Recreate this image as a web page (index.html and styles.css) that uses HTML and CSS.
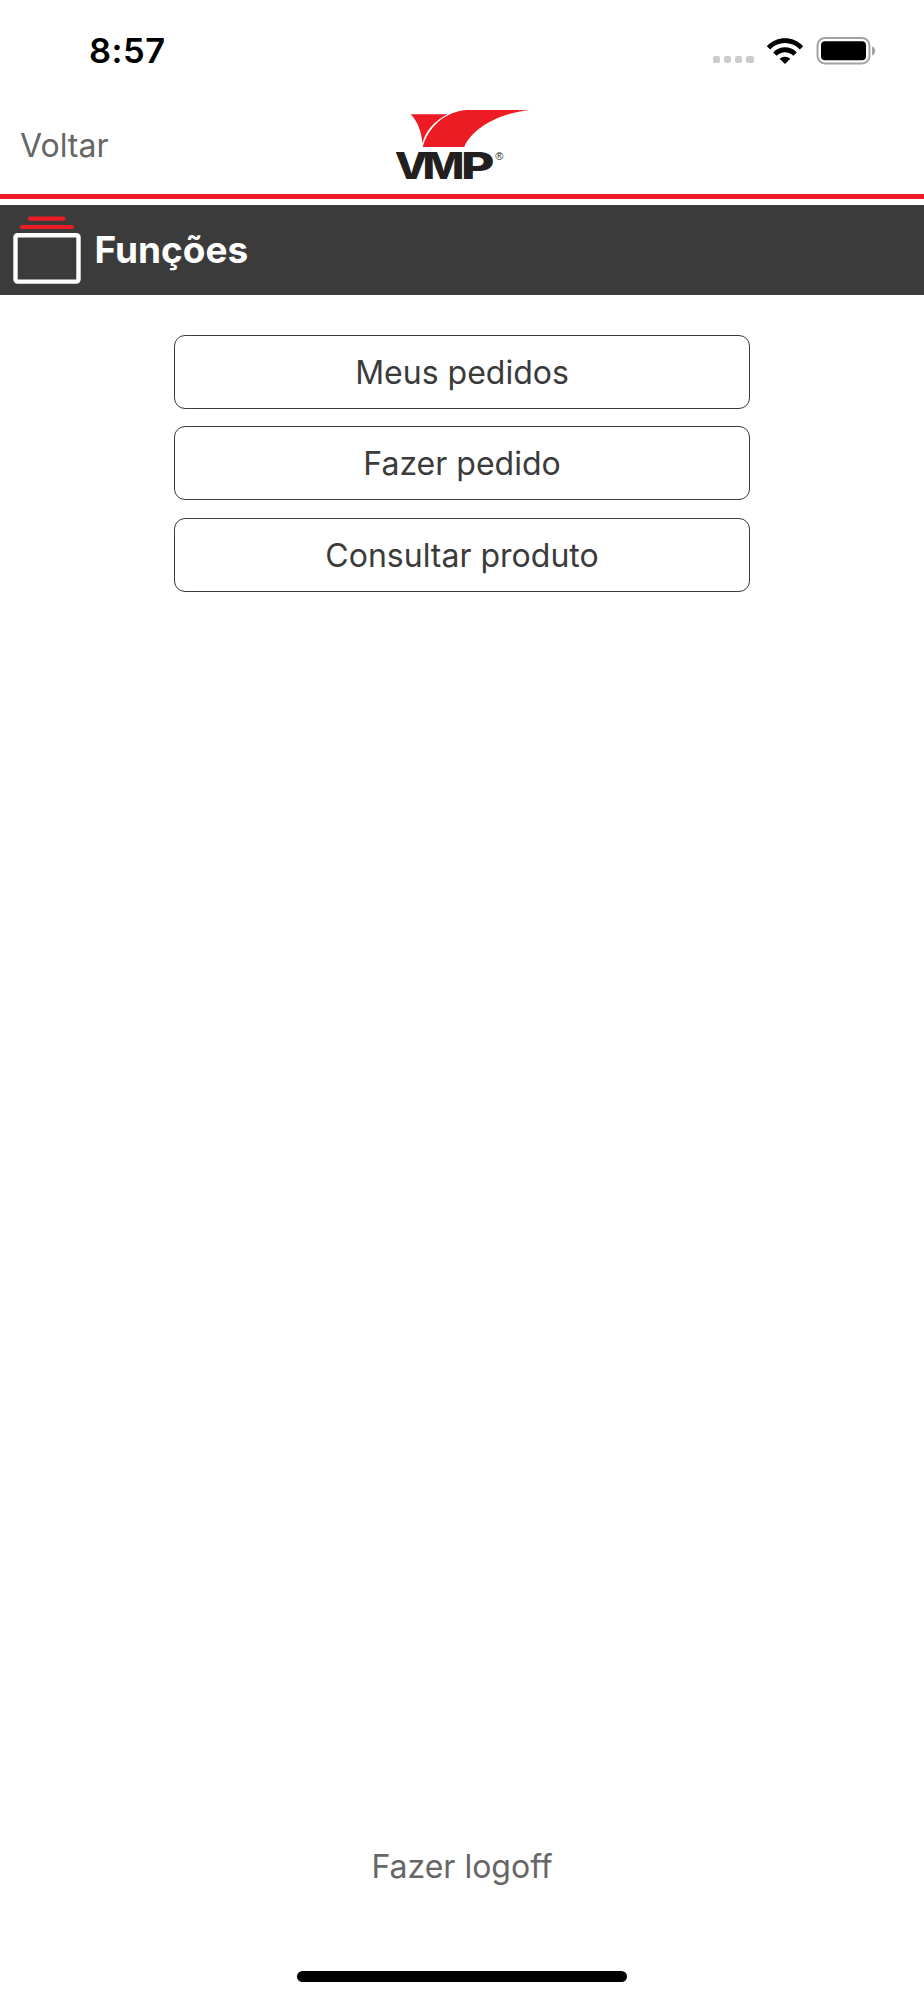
FILE: index.html
```html
<!DOCTYPE html>
<html lang="pt-BR">
<head>
    <meta charset="UTF-8">
    <meta name="viewport" content="width=device-width, initial-scale=1.0">
    <title>VMP - Funções</title>
    <link rel="stylesheet" href="styles.css">
</head>
<body>
    <div class="app">
        <div class="status-bar">
            <span class="time">8:57</span>
            <div class="status-icons">
                <div class="dots">
                    <i></i><i></i><i></i><i></i>
                </div>
                <svg class="wifi" width="38" height="28" viewBox="0 0 38 28">
                    <path d="M0.8 9.2C11 -1.4 27 -1.4 37.2 9.2L33.8 12.4C25.5 4 12.5 4 4.2 12.4Z"/>
                    <path d="M7.2 15.4C13.8 8.6 24.2 8.6 30.8 15.4L27.4 18.7C22.5 14 15.5 14 10.6 18.7Z"/>
                    <path d="M13.6 21.8C16.6 19 21.4 19 24.4 21.8L19 27Z"/>
                </svg>
                <svg class="battery" width="60" height="28" viewBox="0 0 60 28">
                    <rect class="battery-frame" x="1.5" y="1" width="52" height="25.5" rx="7.5"/>
                    <rect x="5" y="4.3" width="45" height="19" rx="4"/>
                    <path class="battery-tip" d="M56 9.5C60.3 11 60.3 17 56 18.5Z"/>
                </svg>
            </div>
        </div>

        <div class="header">
            <a class="back" href="#">Voltar</a>
            <svg class="logo" width="140" height="88" viewBox="0 0 140 88">
                <g class="logo-red">
                    <path d="M18.7 8.3H55.5C42 15 33.5 25 30.4 37.3C29.5 26 26 16 18.7 8.3Z"/>
                    <path d="M30.7 41C36 22 52 5 76 4L137.5 4C108 7 80 22 72.3 41Z"/>
                </g>
                <g class="logo-name">
                    <text x="2.8" y="73" textLength="33" lengthAdjust="spacingAndGlyphs">V</text>
                    <text x="30.5" y="73" textLength="42" lengthAdjust="spacingAndGlyphs">M</text>
                    <text x="69" y="73" textLength="33.5" lengthAdjust="spacingAndGlyphs">P</text>
                </g>
                <text class="logo-mark" x="103.3" y="53.8">®</text>
            </svg>
        </div>

        <div class="title-bar">
            <svg class="title-icon" width="68" height="68" viewBox="0 0 68 68">
                <path class="icon-line" d="M17 2.6H50.5M9 11H59"/>
                <rect class="icon-box" x="2.5" y="19.3" width="63" height="46.3" rx="2"/>
            </svg>
            <h1>Funções</h1>
        </div>

        <div class="menu">
            <button class="button">Meus pedidos</button>
            <button class="button">Fazer pedido</button>
            <button class="button">Consultar produto</button>
        </div>

        <a class="logoff" href="#">Fazer logoff</a>
        <div class="home-indicator"></div>
    </div>
</body>
</html>
```
FILE: styles.css
```css
* {
    box-sizing: border-box;
}

body {
    margin: 0;
    background-color: #fff;
    font-family: Inter, "Liberation Sans", sans-serif;
}

.app {
    display: flex;
    flex-direction: column;
    height: 2000px;
}

.status-bar {
    display: flex;
    justify-content: space-between;
    height: 104px;
    padding: 30px 48px 0 89px;
}

.time {
    font-size: 34.5px;
    font-weight: 600;
    line-height: 42px;
    letter-spacing: 0.5px;
}

.status-icons {
    display: flex;
    align-items: flex-start;
    padding-top: 6.5px;
}

.dots {
    display: flex;
    gap: 3.9px;
    margin: 19.5px 12px 0 0;
}

.dots i {
    width: 7.3px;
    height: 7.3px;
    border-radius: 2px;
    background-color: #ccc;
}

.battery {
    margin-left: 12.5px;
}

.battery-frame {
    fill: none;
    stroke: #a3a3a3;
    stroke-width: 2;
}

.battery-tip {
    fill: #a3a3a3;
}

.header {
    display: grid;
    grid-template-columns: 1fr 140px 1fr;
    height: 95px;
    border-bottom: 5px solid #ed1c24;
}

.back {
    padding: 22px 0 0 20px;
    font-size: 32px;
    line-height: 39px;
    color: #666;
    text-decoration: none;
}

.logo {
    margin-top: 2px;
}

.logo-red {
    fill: #ed1c24;
}

.logo-name {
    fill: #231f20;
    font-size: 36.7px;
    font-weight: 800;
}

.logo-mark {
    fill: #231f20;
    font-family: "Liberation Sans", sans-serif;
    font-size: 11px;
}

.title-bar {
    display: flex;
    height: 89.7px;
    margin-top: 6px;
    padding: 11px 13px;
    background-color: #3b3b3b;
}

.title-bar h1 {
    margin: 10.5px 0 0 13.5px;
    font-size: 37px;
    line-height: 45px;
    color: #fff;
}

.icon-line {
    stroke: #ed1c24;
    stroke-width: 4.2;
    stroke-linecap: round;
}

.icon-box {
    fill: none;
    stroke: #fff;
    stroke-width: 4.4;
}

.menu {
    display: flex;
    flex-direction: column;
    align-items: center;
    gap: 17.5px;
    padding-top: 40.3px;
}

.button {
    width: 576px;
    height: 74px;
    padding: 1px 0 0;
    border: 1px solid #3b3b3b;
    border-radius: 11px;
    background-color: #fff;
    font-family: inherit;
    font-size: 32px;
    color: #3b3b3b;
}

.logoff {
    margin: auto auto 85px;
    font-size: 32px;
    line-height: 39px;
    color: #666;
    text-decoration: none;
}

.home-indicator {
    width: 330px;
    height: 11px;
    margin: 0 auto 18px;
    border-radius: 6px;
    background-color: #000;
}
```
